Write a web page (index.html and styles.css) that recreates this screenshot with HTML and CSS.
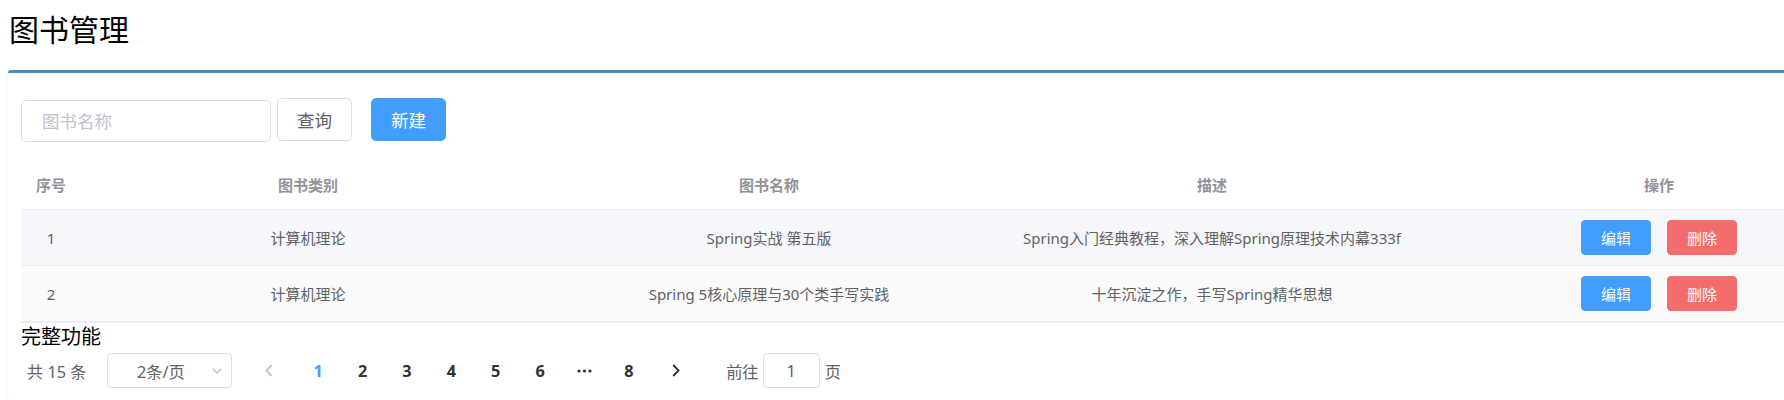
FILE: index.html
```html
<!DOCTYPE html>
<html lang="zh-CN">
<head>
<meta charset="utf-8">
<title>图书管理</title>
<link rel="stylesheet" href="styles.css">
</head>
<body>
<h1 class="page-title">图书管理</h1>
<section class="box">
  <div class="toolbar">
    <input class="search-input" type="text" placeholder="图书名称">
    <button class="btn btn-default">查询</button>
    <button class="btn btn-primary">新建</button>
  </div>
  <table class="book-table">
    <colgroup>
      <col class="c-index">
      <col class="c-cat">
      <col class="c-name">
      <col class="c-desc">
      <col class="c-ops">
    </colgroup>
    <thead>
      <tr><th>序号</th><th>图书类别</th><th>图书名称</th><th>描述</th><th>操作</th></tr>
    </thead>
    <tbody>
      <tr class="row-hover">
        <td>1</td>
        <td>计算机理论</td>
        <td>Spring实战 第五版</td>
        <td>Spring入门经典教程，深入理解Spring原理技术内幕333f</td>
        <td><div class="ops"><button class="mini mini-primary">编辑</button><button class="mini mini-danger">删除</button></div></td>
      </tr>
      <tr class="row-stripe">
        <td>2</td>
        <td>计算机理论</td>
        <td>Spring 5核心原理与30个类手写实践</td>
        <td>十年沉淀之作，手写Spring精华思想</td>
        <td><div class="ops"><button class="mini mini-primary">编辑</button><button class="mini mini-danger">删除</button></div></td>
      </tr>
    </tbody>
  </table>
  <div class="caption">完整功能</div>
  <div class="pagination">
    <span class="total">共 15 条</span>
    <div class="sizes">
      <span class="sizes-text">2条/页</span>
      <svg class="caret" width="10" height="6" viewBox="0 0 10 6"><path d="M0.8 0.8 L5 5 L9.2 0.8" fill="none" stroke="#c0c4cc" stroke-width="1.3"/></svg>
    </div>
    <span class="btn-prev"><svg width="8" height="13" viewBox="0 0 8 13"><path d="M6.8 1 L1.4 6.5 L6.8 12" fill="none" stroke="#c0c4cc" stroke-width="1.8"/></svg></span>
    <ul class="pager">
      <li class="active">1</li>
      <li>2</li>
      <li>3</li>
      <li>4</li>
      <li>5</li>
      <li>6</li>
      <li class="more"><svg width="15" height="4" viewBox="0 0 15 4"><circle cx="2" cy="2" r="1.6" fill="#303133"/><circle cx="7.5" cy="2" r="1.6" fill="#303133"/><circle cx="13" cy="2" r="1.6" fill="#303133"/></svg></li>
      <li>8</li>
    </ul>
    <span class="btn-next"><svg width="8" height="13" viewBox="0 0 8 13"><path d="M1.2 1 L6.6 6.5 L1.2 12" fill="none" stroke="#303133" stroke-width="1.8"/></svg></span>
    <span class="jump">前往<span class="jump-input">1</span><span class="jump-unit">页</span></span>
  </div>
</section>
</body>
</html>
```

FILE: styles.css
```css
html, body {
  margin: 0;
  background: #fff;
  overflow: hidden;
}

body {
  padding: 0 0 0 8px;
  font-family: "Noto Sans", "Noto Sans CJK SC", sans-serif;
  color: #000;
}

.page-title {
  margin: 0 0 24px;
  padding: 13px 0 0 1px;
  font-size: 30px;
  line-height: 33px;
  font-weight: 400;
  color: #000;
}

.box {
  width: 1902px;
  box-sizing: border-box;
  border-top: 3px solid #3c8dbc;
  border-radius: 3px;
  box-shadow: 0 1px 1.5px rgba(0, 0, 0, 0.12);
  padding: 25px 13px 12px;
  background: #fff;
}

.toolbar {
  display: flex;
  align-items: flex-start;
}

.search-input {
  width: 250px;
  height: 42px;
  margin: 2px 0 0;
  box-sizing: border-box;
  border: 1px solid #dcdfe6;
  border-radius: 5px;
  padding: 0 20px;
  font-family: inherit;
  font-size: 17.5px;
  color: #606266;
  outline: none;
}

.search-input::placeholder {
  color: #c0c4cc;
}

.btn {
  width: 75px;
  height: 43px;
  box-sizing: border-box;
  border-radius: 5px;
  padding: 0;
  font-family: inherit;
  font-size: 17.5px;
  cursor: pointer;
}

.btn-default {
  margin-left: 6px;
  border: 1px solid #dcdfe6;
  background: #fff;
  color: #606266;
}

.btn-primary {
  margin-left: 19px;
  border: 1px solid #409eff;
  background: #409eff;
  color: #fff;
}

.book-table {
  margin-top: 18px;
  width: 1876px;
  table-layout: fixed;
  border-collapse: collapse;
  font-size: 15px;
}

.c-index { width: 60px; }
.c-cat { width: 454px; }
.c-name { width: 468px; }
.c-desc { width: 418px; }
.c-ops { width: 476px; }

.book-table th {
  height: 49px;
  padding: 0;
  border-bottom: 1px solid #ebeef5;
  color: #909399;
  font-weight: 700;
  text-align: center;
  background: #fff;
}

.book-table td {
  height: 55px;
  padding: 0;
  border-bottom: 1px solid #ebeef5;
  color: #606266;
  text-align: center;
}

.book-table tbody tr:last-child td {
  border-bottom-width: 2px;
}

.row-hover td { background: #f5f7fa; }
.row-stripe td { background: #fafafa; }

.ops {
  display: flex;
  justify-content: center;
  gap: 16px;
}

.mini {
  width: 70px;
  height: 35px;
  box-sizing: border-box;
  border-radius: 4px;
  padding: 0;
  font-family: inherit;
  font-size: 15px;
  color: #fff;
}

.mini-primary {
  border: 1px solid #409eff;
  background: #409eff;
}

.mini-danger {
  border: 1px solid #f56c6c;
  background: #f56c6c;
}

.caption {
  margin-top: 1px;
  font-size: 20px;
  line-height: 26px;
  color: #000;
}

.pagination {
  margin-top: 3px;
  height: 35px;
  display: flex;
  align-items: center;
  padding-left: 6px;
  font-size: 16.25px;
  color: #606266;
}

.total {
  width: 80px;
}

.sizes {
  width: 125px;
  height: 35px;
  box-sizing: border-box;
  border: 1px solid #dcdfe6;
  border-radius: 4px;
  display: flex;
  align-items: center;
  padding-left: 29px;
}

.sizes-text {
  flex: 1;
}

.caret {
  margin-right: 9px;
}

.btn-prev,
.btn-next {
  width: 50px;
  height: 35px;
  display: flex;
  align-items: center;
  justify-content: center;
}

.btn-prev {
  margin-left: 14px;
}

.btn-prev svg {
  margin-right: 4px;
}

.pager {
  display: flex;
  margin: 0;
  padding: 0;
  list-style: none;
}

.pager li {
  width: 44.4px;
  height: 35px;
  display: flex;
  align-items: center;
  justify-content: center;
  font-weight: 700;
  color: #303133;
}

.pager li.active {
  color: #409eff;
}

.jump {
  margin-left: 25px;
  display: flex;
  align-items: center;
}

.jump-input {
  margin-left: 4px;
  width: 57px;
  height: 35px;
  box-sizing: border-box;
  border: 1px solid #dcdfe6;
  border-radius: 4px;
  display: flex;
  align-items: center;
  justify-content: center;
}

.jump-unit {
  margin-left: 5px;
}
```
